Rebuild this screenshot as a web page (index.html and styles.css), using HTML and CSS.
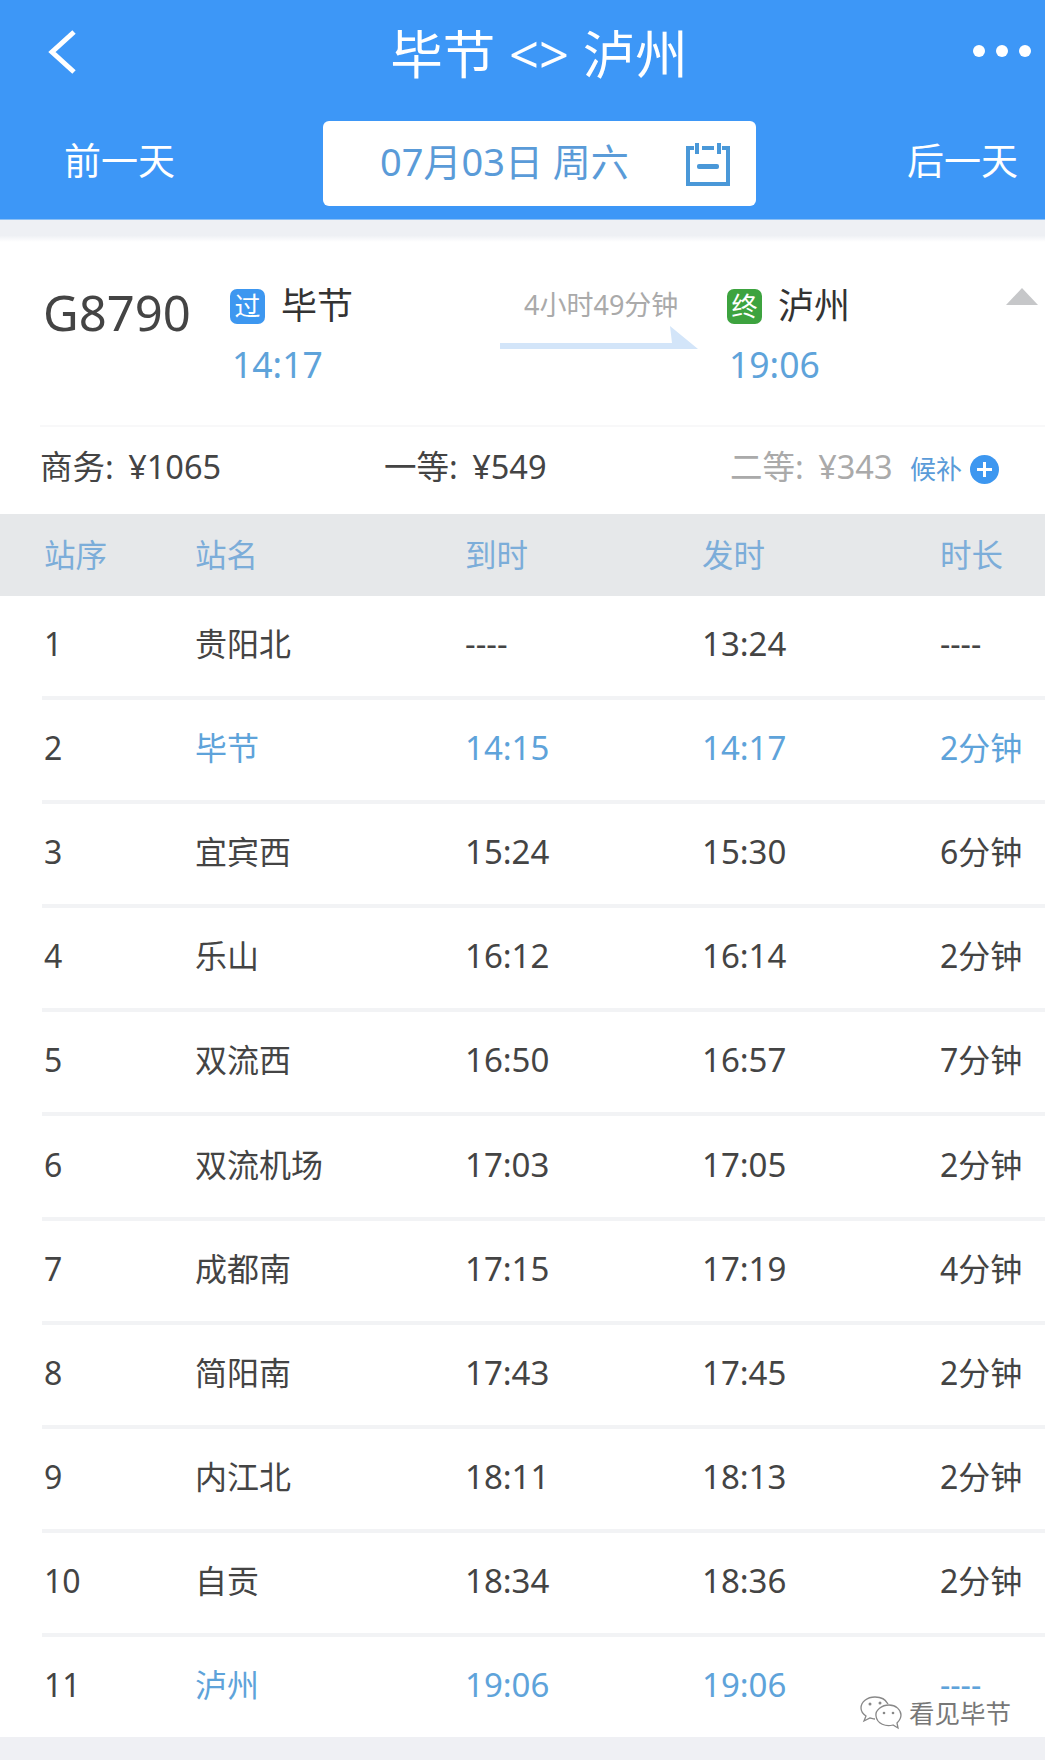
FILE: index.html
```html
<!DOCTYPE html>
<html lang="zh">
<head>
  <meta charset="UTF-8" />
  <title>毕节 &lt;&gt; 泸州</title>
  <link rel="stylesheet" href="styles.css">
</head>
<body>
<div class="page">
  <!-- Blue top bar -->
  <header class="topbar">
    <div class="title-row">
      <svg class="back" viewBox="0 0 32 48"><path d="M28 4 L6 24 L28 44" /></svg>
      <h1>毕节 &lt;&gt; 泸州</h1>
      <div class="dots"><i></i><i></i><i></i></div>
    </div>
    <div class="date-row">
      <span class="day-link">前一天</span>
      <div class="date-box">
        <span>07月03日 周六</span>
        <svg class="cal" viewBox="0 0 44 44">
          <path d="M8 6 H2 V42 H42 V6 H36 M16 6 H28" />
          <path d="M11 1 V12 M33 1 V12" />
          <rect x="11" y="22" width="22" height="5" rx="2" class="cal-bar" />
        </svg>
      </div>
      <span class="day-link">后一天</span>
    </div>
  </header>
  <div class="band"></div>

  <!-- Train summary -->
  <section class="summary">
    <div class="train-no">G8790</div>
    <div class="stop stop-from">
      <div class="stop-name"><span class="badge badge-blue">过</span>毕节</div>
      <div class="stop-time">14:17</div>
    </div>
    <div class="duration">
      <span>4小时49分钟</span>
      <svg class="arrow" viewBox="0 0 198 24"><path d="M0 17 H172 L170 0 L198 23 H0 Z" /></svg>
    </div>
    <div class="stop stop-to">
      <div class="stop-name"><span class="badge badge-green">终</span>泸州</div>
      <div class="stop-time">19:06</div>
    </div>
    <div class="collapse"></div>
  </section>

  <section class="prices">
    <span class="price price-a">商务: ¥1065</span>
    <span class="price price-b">一等: ¥549</span>
    <span class="price price-c">二等: ¥343</span>
    <span class="waitlist">候补<b class="plus"></b></span>
  </section>

  <!-- Stops table -->
  <div class="row head">
    <span>站序</span><span>站名</span><span>到时</span><span>发时</span><span>时长</span>
  </div>
  <div class="row"><span>1</span><span>贵阳北</span><span>----</span><span>13:24</span><span>----</span></div>
  <div class="row on"><span class="num">2</span><span>毕节</span><span>14:15</span><span>14:17</span><span>2分钟</span></div>
  <div class="row"><span>3</span><span>宜宾西</span><span>15:24</span><span>15:30</span><span>6分钟</span></div>
  <div class="row"><span>4</span><span>乐山</span><span>16:12</span><span>16:14</span><span>2分钟</span></div>
  <div class="row"><span>5</span><span>双流西</span><span>16:50</span><span>16:57</span><span>7分钟</span></div>
  <div class="row"><span>6</span><span>双流机场</span><span>17:03</span><span>17:05</span><span>2分钟</span></div>
  <div class="row"><span>7</span><span>成都南</span><span>17:15</span><span>17:19</span><span>4分钟</span></div>
  <div class="row"><span>8</span><span>简阳南</span><span>17:43</span><span>17:45</span><span>2分钟</span></div>
  <div class="row"><span>9</span><span>内江北</span><span>18:11</span><span>18:13</span><span>2分钟</span></div>
  <div class="row"><span>10</span><span>自贡</span><span>18:34</span><span>18:36</span><span>2分钟</span></div>
  <div class="row on last"><span class="num">11</span><span>泸州</span><span>19:06</span><span>19:06</span><span>----</span></div>
  <div class="foot"></div>

  <!-- Account watermark -->
  <div class="mark">
    <svg class="wechat" viewBox="0 0 42 34">
      <path d="M15 1 C7 1 1 6 1 12 C1 16 3 18 6 20 L4 25 L10 22 C11 22 13 23 15 23" />
      <path d="M15 1 C21 1 26 4 28 8" />
      <path d="M29 9 C36 9 41 14 41 19 C41 23 39 25 37 27 L38 32 L33 29 C26 31 17 28 16 20 C15 14 22 9 29 9 Z" />
      <circle cx="10" cy="8" r="1.5" /><circle cx="20" cy="7" r="1.5" />
      <circle cx="24" cy="17" r="1.3" /><circle cx="33" cy="17" r="1.3" />
    </svg>
    <span>看见毕节</span>
  </div>
</div>
</body>
</html>
```

FILE: styles.css
```css
* {
  box-sizing: border-box;
}
body {
  margin: 0;
  background: #fff;
  font-family: "Noto Sans", "Noto Sans CJK SC", sans-serif;
  color: #444;
}
.page {
  position: relative;
  width: 1045px;
  height: 1760px;
  overflow: hidden;
}

/* Top bar */
.topbar {
  height: 220px;
  background: #3d97f7;
  color: #fff;
  padding-bottom: 14px;
  border-bottom: 1px solid #8cc0f5;
}
.title-row {
  height: 121px;
  display: flex;
  align-items: flex-start;
  padding: 28px 14px 0 46px;
}
.back {
  width: 32px;
  height: 48px;
  fill: none;
  stroke: #fff;
  stroke-width: 5;
}
h1 {
  flex: 1;
  margin: -2px -27px 0 0;
  text-align: center;
  font-size: 52.5px;
  line-height: 56px;
  font-weight: 400;
}
.dots {
  display: flex;
  gap: 11px;
  padding-top: 17px;
}
.dots i {
  width: 12px;
  height: 12px;
  border-radius: 50%;
  background: #fff;
}
.date-row {
  height: 85px;
  display: flex;
  align-items: center;
  justify-content: space-between;
  padding: 0 28px 0 64px;
}
.day-link {
  font-size: 37px;
  width: 110px;
  white-space: nowrap;
  margin-bottom: 9px;
}
.date-box {
  width: 433px;
  height: 85px;
  margin-left: 47px;
  margin-right: 49px;
  display: flex;
  align-items: center;
  justify-content: space-between;
  padding: 0 26px 9px 57px;
  background: #fff;
  border-radius: 6px;
  color: #5a9bd8;
  font-size: 38px;
}
.cal {
  width: 44px;
  height: 44px;
  margin-top: 9px;
  fill: none;
  stroke: #4a98d8;
  stroke-width: 4;
}
.cal-bar {
  fill: #4a98d8;
  stroke: none;
}
.band {
  height: 22px;
  background: linear-gradient(#eef0f4 70%, #fff);
}

/* Summary */
.summary {
  position: relative;
  height: 185px;
  border-bottom: 2px solid #f8f8f9;
  margin-left: 40px;
}
.train-no {
  position: absolute;
  left: 3px;
  top: 40px;
  font-size: 49px;
  line-height: 60px;
  color: #444;
}
.stop {
  position: absolute;
  top: 42px;
}
.stop-from {
  left: 190px;
}
.stop-to {
  left: 687px;
}
.stop-name {
  display: flex;
  align-items: center;
  gap: 16px;
  font-size: 36px;
  line-height: 44px;
  color: #333;
}
.badge {
  width: 35px;
  height: 35px;
  border-radius: 7px;
  color: #fff;
  font-size: 26px;
  line-height: 35px;
  text-align: center;
}
.badge-blue {
  background: #3d97f0;
}
.badge-green {
  background: #3da33f;
}
.stop-time {
  margin: 14px 0 0 2px;
  font-size: 35.5px;
  line-height: 44px;
  color: #5ea3da;
}
.duration {
  position: absolute;
  left: 460px;
  top: 45px;
  width: 198px;
  white-space: nowrap;
  font-size: 27px;
  line-height: 36px;
  color: #aaa;
  padding-left: 24px;
}
.arrow {
  position: absolute;
  left: 0;
  top: 39px;
  width: 198px;
  height: 24px;
  fill: #d3e5f9;
}
.collapse {
  position: absolute;
  right: 7px;
  top: 46px;
  border-left: 16px solid transparent;
  border-right: 16px solid transparent;
  border-bottom: 17px solid #c6c7c9;
}

/* Prices */
.prices {
  position: relative;
  height: 87px;
  font-size: 32.5px;
  word-spacing: 6px;
}
.price {
  position: absolute;
  top: 18px;
  line-height: 44px;
  white-space: nowrap;
}
.price-a {
  left: 40px;
}
.price-b {
  left: 384px;
}
.price-c {
  left: 730px;
  color: #aaa;
}
.waitlist {
  position: absolute;
  left: 910px;
  top: 22px;
  display: flex;
  align-items: center;
  gap: 8px;
  font-size: 26px;
  line-height: 40px;
  color: #5a9bd8;
}
.plus {
  position: relative;
  width: 29px;
  height: 29px;
  border-radius: 50%;
  background: #3d97f0;
}
.plus::before,
.plus::after {
  content: "";
  position: absolute;
  background: #fff;
}
.plus::before {
  left: 7px;
  right: 7px;
  top: 13px;
  height: 3px;
}
.plus::after {
  top: 7px;
  bottom: 7px;
  left: 13px;
  width: 3px;
}

/* Table */
.row {
  display: grid;
  grid-template-columns: 151px 270px 237px 238px 1fr;
  align-items: center;
  height: 104.1px;
  padding: 0 0 8px 44px;
  font-size: 32px;
  line-height: 28px;
  color: #444;
  white-space: nowrap;
  position: relative;
}
.row span:nth-child(3),
.row span:nth-child(4) {
  font-size: 33px;
}
.row::after {
  content: "";
  position: absolute;
  left: 42px;
  right: 0;
  bottom: 0;
  height: 4px;
  background: #f2f3f5;
}
.row.head {
  height: 82px;
  padding-bottom: 0;
  background: #e6e8ea;
  color: #7cadd9;
}
.row.head span {
  font-size: 31.5px;
}
.row.head::after,
.row.last::after {
  display: none;
}
.row.on {
  color: #5ea3da;
}
.row.on .num {
  color: #444;
}
.row.last {
  height: 100px;
  padding-bottom: 4px;
}
.foot {
  height: 40px;
  background: #eff0f4;
}

/* Watermark */
.mark {
  position: absolute;
  left: 860px;
  top: 1696px;
  display: flex;
  align-items: center;
  gap: 7px;
  font-size: 25.5px;
  line-height: 26px;
  color: #777;
}
.wechat {
  width: 42px;
  height: 34px;
  fill: none;
  stroke: #888;
  stroke-width: 1.3;
}
.wechat circle {
  fill: #888;
  stroke: none;
}
```
